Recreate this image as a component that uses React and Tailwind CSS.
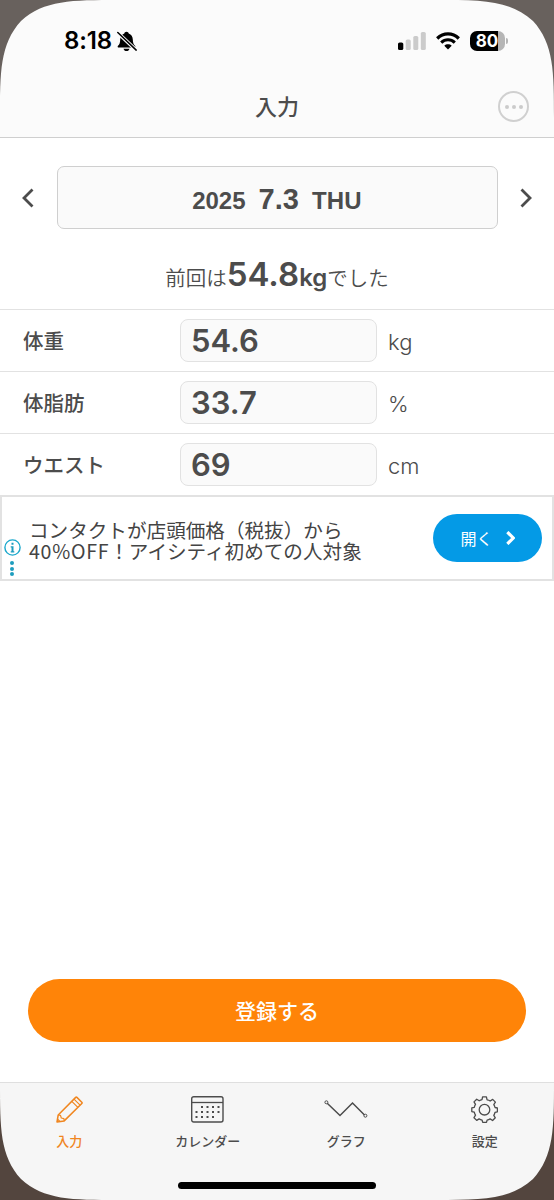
const fields = [
  { label: '体重', value: '54.6', unit: 'kg' },
  { label: '体脂肪', value: '33.7', unit: '%' },
  { label: 'ウエスト', value: '69', unit: 'cm' },
];

const corners = [
  { pos: 'top-0 left-0', fill: '#68615d' },
  { pos: 'top-0 right-0 -scale-x-100', fill: '#68615d' },
  { pos: 'bottom-0 left-0 -scale-y-100', fill: '#53453e' },
  { pos: 'bottom-0 right-0 -scale-100', fill: '#53453e' },
];

function Chevron({ className, flip, weight = 2.8 }) {
  return (
    <svg className={className} viewBox="0 0 12 20" fill="none" stroke="currentColor">
      <path d={flip ? 'M10.5 1.5 2 10l8.5 8.5' : 'M1.5 1.5 10 10l-8.5 8.5'} strokeWidth={weight} />
    </svg>
  );
}

function StatusBar() {
  return (
    <div className="flex h-[82px] items-center justify-between pl-[64px] pr-[46px]">
      <div className="flex items-center gap-[5px] text-black">
        <span className="font-[Inter] text-[24px] leading-none font-semibold tracking-[-0.1px]">8:18</span>
        <svg className="h-[21px] w-[20px]" viewBox="0 0 20 21">
          <path d="M9.5.8c1.2 0 2 .7 2.2 1.7 2.7.9 4 3.2 4.1 6 .1 3.6.8 4.8 2.2 6.3.7.8.4 1.8-.8 1.8H1.9c-1.3 0-1.6-1-.9-1.8 1.500-1.500 2.100-2.700 2.200-6.300.1-2.800 1.400-5.100 4.100-6C7.500 1.500 8.300.8 9.500.8z" fill="currentColor" />
          <path d="M6.500 17.800h6c-.4 1.500-1.500 2.300-3 2.300s-2.600-.8-3-2.300z" fill="currentColor" />
          <path d="m.5 1.500 18.500 17.500" stroke="#fbfbfb" strokeWidth="3.600" />
          <path d="m.8 1.500 18.400 17.600" stroke="currentColor" strokeWidth="1.500" strokeLinecap="round" />
        </svg>
      </div>
      <div className="flex items-center">
        <svg className="mr-[10px] h-[18px] w-[28px]" viewBox="0 0 28 18">
          <rect x="0" y="10.500" width="5.300" height="7.500" rx="1.600" fill="#000" />
          <rect x="7.700" y="7.500" width="5" height="10.500" rx="1.600" fill="#cbcbcb" />
          <rect x="15.300" y="4" width="5" height="14" rx="1.600" fill="#cbcbcb" />
          <rect x="22.800" y="0" width="5" height="18" rx="1.600" fill="#cbcbcb" />
        </svg>
        <svg className="mr-[10px] h-[18px] w-[24px]" viewBox="0 0 24 18" fill="none" stroke="#000">
          <path d="M1.200 6.500C7.500.3 16.500.3 22.800 6.500" strokeWidth="3.200" />
          <path d="M5.200 10.600c4-3.800 9.600-3.800 13.600 0" strokeWidth="3.100" />
          <path d="m8.300 13.700c2-1.900 5.400-1.900 7.400 0L12 17.500z" fill="#000" stroke="none" />
        </svg>
        <div className="flex h-[20px] w-[35px] items-center justify-center overflow-hidden rounded-[7px] bg-linear-to-r from-black from-80% to-[#b5b5b5] to-80%">
          <span className="font-[Inter] text-[17px] leading-none font-bold text-white">80</span>
        </div>
        <div className="ml-[1.5px] h-[6px] w-[2px] rounded-r-full bg-[#b5b5b5]" />
      </div>
    </div>
  );
}

function PencilIcon() {
  return (
    <svg className="size-[27px]" viewBox="0 0 27 27" fill="none" stroke="currentColor" strokeWidth="1.5" strokeLinejoin="round">
      <path d="M1 26 2.200 19 19.700 1.400c.4-.4.800-.4 1.200 0l4.900 4.900c.4.400.4.800 0 1.200L8.200 24.900z" />
      <path d="m2.200 19 2.300.3.800 2.700 2.600.6.300 2.300M15.800 5.300l6.100 6.100M18 3.100l6.100 6.100M1.600 23.200l2.300 2.300" strokeWidth="1.2" />
    </svg>
  );
}

function CalendarIcon() {
  const rows = [
    { y: 11, xs: [11, 16.5, 22, 27.5] },
    { y: 16, xs: [5.5, 11, 16.5, 22, 27.5] },
    { y: 21, xs: [5.5, 11, 16.5, 22] },
  ];
  return (
    <svg className="h-[27px] w-[33px]" viewBox="0 0 33 27">
      <rect x=".7" y=".7" width="31.300" height="25.300" rx="2" fill="none" stroke="currentColor" strokeWidth="1.400" />
      <path d="M.7 6.500H32" stroke="currentColor" strokeWidth="1.300" />
      {rows.map((r) => r.xs.map((x) => <rect key={`${x}-${r.y}`} x={x - 1} y={r.y - 1} width="2" height="2" fill="currentColor" />))}
    </svg>
  );
}

function GraphIcon() {
  return (
    <svg className="h-[27px] w-[44px]" viewBox="0 0 44 27" fill="none" stroke="currentColor">
      <path d="M3.200 7.200 16 19.500 28.500 7l12 12" strokeWidth="1.500" />
      <circle cx="2.400" cy="6.300" r="1.500" />
      <circle cx="41.400" cy="19.700" r="1.500" />
    </svg>
  );
}

function GearIcon() {
  return (
    <svg className="size-[27px]" viewBox="0 0 27 27" fill="none" stroke="currentColor" strokeWidth="1.3" strokeLinejoin="round">
      <path d="M11.600.8h3.800l.7 3q1.800.2 3.100 1.200l2.500-1.600 2.700 2.700-1.600 2.500q.9 1.300 1.200 2.900l2.400.5v3.800l-2.400.6q-.4 1.600-1.200 3l1.500 2.400-2.700 2.700-2.500-1.600q-1.300.8-3 1.200l-.6 2.200h-3.800l-.6-2.200q-1.600-.4-3-1.200l-2.400 1.500-2.700-2.700 1.500-2.500q-.9-1.300-1.200-3L.8 15.600v-3.800l2.500-.5q.3-1.600 1.200-3L3 5.900l2.700-2.700 2.500 1.600q1.200-.8 2.800-1.200z" />
      <circle cx="13.500" cy="13.700" r="5.300" />
    </svg>
  );
}

const tabs = [
  { label: '入力', Icon: PencilIcon, active: true },
  { label: 'カレンダー', Icon: CalendarIcon },
  { label: 'グラフ', Icon: GraphIcon },
  { label: '設定', Icon: GearIcon },
];

export default function App() {
  return (
    <div className="relative flex h-[1200px] w-[554px] flex-col overflow-hidden bg-white font-['Noto_Sans_CJK_JP',sans-serif] text-[#4c4c4c]">
      <header className="h-[138px] shrink-0 border-b border-[#cfcfcf] bg-[#fbfbfb]">
        <StatusBar />
        <div className="grid h-[49px] grid-cols-[1fr_auto_1fr] items-center px-[25px]">
          <h1 className="col-start-2 mb-[4px] text-[22px] leading-none font-medium">入力</h1>
          <button className="flex size-[31px] items-center justify-center gap-[3px] justify-self-end rounded-full border-2 border-[#d0d0d0]">
            <i className="size-[4px] rounded-full bg-[#cbcbcb]" />
            <i className="size-[4px] rounded-full bg-[#cbcbcb]" />
            <i className="size-[4px] rounded-full bg-[#cbcbcb]" />
          </button>
        </div>
      </header>

      <main className="flex flex-1 flex-col">
        <div className="mt-[28px] flex items-center justify-between px-[22px]">
          <Chevron flip className="h-[20px] w-[12px]" />
          <div className="flex h-[63px] w-[441px] items-baseline justify-center rounded-[7px] border border-[#cfcfcf] bg-[#fafafa] pt-[11px] font-['Liberation_Sans',sans-serif] text-[24px] font-bold">
            <span>2025</span>
            <span className="mx-[13px] text-[29px]">7.3</span>
            <span className="tracking-[0.2px]">THU</span>
          </div>
          <Chevron className="h-[20px] w-[12px]" />
        </div>

        <p className="flex h-[80px] items-baseline justify-center pt-[20px] text-[20.5px] leading-[50px] font-[350]">
          前回は
          <span className="font-[Inter] text-[33px] font-semibold">54.8</span>
          <span className="font-[Inter] text-[24px] font-semibold">kg</span>
          でした
        </p>

        {fields.map((f) => (
          <div key={f.label} className="flex h-[62px] items-center border-t border-[#e2e2e2] pl-[23px]">
            <label className="w-[157px] text-[20.5px] font-medium">{f.label}</label>
            <div className="flex h-[43px] w-[197px] items-center rounded-[8px] border border-[#e2e2e2] bg-[#fafafa] pl-[10px] font-[Inter] text-[31px] leading-none font-semibold">{f.value}</div>
            <span className="mt-[3px] ml-[11px] font-[Inter] text-[22px] font-light">{f.unit}</span>
          </div>
        ))}

        <section className="flex h-[86px] border-2 border-[#e2e2e2] text-[#444]">
          <div className="flex w-[27px] flex-col items-center pt-[42px] pr-[7px] text-[#1e9dbe]">
            <svg className="size-[17px] shrink-0" viewBox="0 0 17 17">
              <circle cx="8.500" cy="8.500" r="7.600" fill="none" stroke="#1ba8cc" strokeWidth="1.400" />
              <path d="M7.500 3.700h2v2h-2zM6.700 7.200h2.800v5h.8v1.300H6.700v-1.300h.8V8.500h-.8z" fill="currentColor" />
            </svg>
            <div className="mt-[5px] flex flex-col gap-[1.5px]">
              <i className="size-[4px] rounded-full bg-current" />
              <i className="size-[4px] rounded-full bg-current" />
              <i className="size-[4px] rounded-full bg-current" />
            </div>
          </div>
          <div className="flex-1 pt-[22px] text-[19.6px] leading-[21px] whitespace-nowrap">
            <p>コンタクトが店頭価格（税抜）から</p>
            <p>
              <span className="tracking-[0.7px]">40%OFF</span>
              ！アイシティ初めての人対象
            </p>
          </div>
          <button className="mt-[17px] mr-[10px] flex h-[48px] w-[109px] items-center justify-center gap-[13px] rounded-full bg-[#049ae6] text-[16px] text-white">
            開く
            <Chevron className="h-[14px] w-[9px]" weight={4.5} />
          </button>
        </section>

        <button className="mx-[28px] mt-auto mb-[40px] h-[63px] rounded-full bg-[#ff8408] text-[21px] font-medium text-white">登録する</button>
      </main>

      <nav className="flex h-[118px] shrink-0 flex-col items-center border-t border-[#dfdfdf] bg-[#f6f6f6]">
        <div className="grid w-full grid-cols-4 pt-[13px]">
          {tabs.map(({ label, Icon, active }) => (
            <div key={label} className={active ? 'flex flex-col items-center text-[#f0861f]' : 'flex flex-col items-center'}>
              <Icon />
              <span className="mt-[8px] text-[13px] leading-[20px] font-medium">{label}</span>
            </div>
          ))}
        </div>
        <div className="mt-[31px] h-[7px] w-[198px] rounded-full bg-black" />
      </nav>

      {corners.map((c) => (
        <svg key={c.pos} className={`absolute size-[118px] ${c.pos}`} viewBox="0 0 118 118">
          <path d="M0 0H118C72 0 44 0 21 21C0 44 0 72 0 118Z" fill={c.fill} />
        </svg>
      ))}
    </div>
  );
}
